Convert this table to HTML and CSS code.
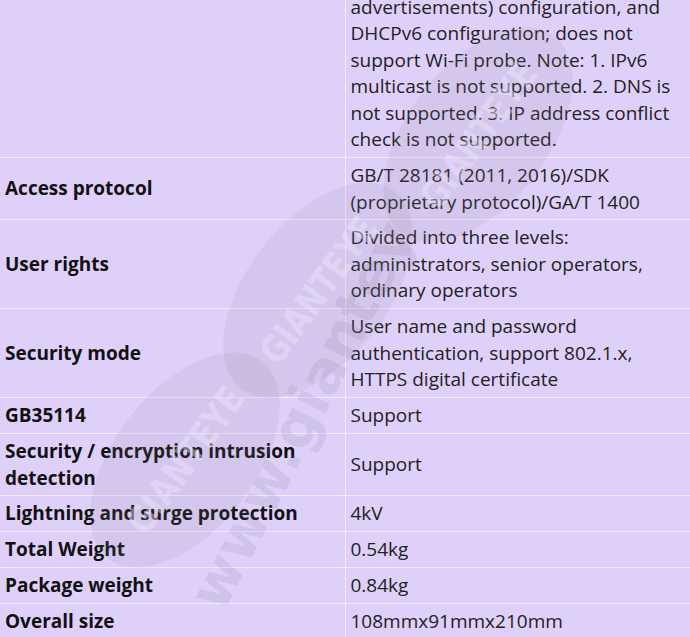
FILE: index.html
```html
<!DOCTYPE html>
<html lang="en">
<head>
<meta charset="utf-8">
<title>Specifications</title>
<link rel="stylesheet" href="styles.css">
</head>
<body>
<div class="page">
  <table class="spec">
    <colgroup><col class="c-label"><col class="c-value"></colgroup>
    <tr class="first">
      <th></th>
      <td>advertisements) configuration, and DHCPv6 configuration; does not support Wi-Fi probe. Note: 1. IPv6 multicast is not supported. 2. DNS is not supported. 3. IP address conflict check is not supported.</td>
    </tr>
    <tr><th>Access protocol</th><td>GB/T 28181 (2011, 2016)/SDK (proprietary protocol)/GA/T 1400</td></tr>
    <tr><th>User rights</th><td>Divided into three levels: administrators, senior operators, ordinary operators</td></tr>
    <tr><th>Security mode</th><td>User name and password authentication, support 802.1.x, HTTPS digital certificate</td></tr>
    <tr><th>GB35114</th><td>Support</td></tr>
    <tr><th>Security / encryption intrusion detection</th><td>Support</td></tr>
    <tr><th>Lightning and surge protection</th><td>4kV</td></tr>
    <tr><th>Total Weight</th><td>0.54kg</td></tr>
    <tr><th>Package weight</th><td>0.84kg</td></tr>
    <tr><th>Overall size</th><td>108mmx91mmx210mm</td></tr>
  </table>
  <div class="watermark" aria-hidden="true">
    <div class="blob b1"><span>GIANTEYE</span></div>
    <div class="blob b2"><span>GIANTEYE</span></div>
    <div class="blob b3"><span>GIANTEYE</span></div>
    <div class="site">www.giantey</div>
  </div>
</div>
</body>
</html>
```
FILE: styles.css
```css
html, body {
  margin: 0;
  padding: 0;
  background: #dfd0fa;
}
.page {
  position: relative;
  width: 690px;
  height: 637px;
  overflow: hidden;
  background: #dfd0fa;
  font-family: "Open Sans", "Noto Sans", sans-serif;
  color: #1a1a1a;
}
.spec {
  width: 690px;
  margin-top: -10.5px;
  border-collapse: collapse;
  table-layout: fixed;
  font-size: 19px;
  line-height: 26.5px;
}
.c-label { width: 345px; }
.c-value { width: 345px; }
.spec th, .spec td {
  padding: 4.2px 4px 4.2px 5px;
  border: 1px solid #f2ebfd;
  text-align: left;
  vertical-align: middle;
}
.spec tr:first-child th, .spec tr:first-child td { border-top: 0; }
.spec th:first-child { border-left: 0; }
.spec td:last-child { border-right: 0; }
.spec th {
  font-weight: 700;
  color: #111;
}
.spec td {
  font-weight: 400;
  color: #222;
}
.watermark {
  position: absolute;
  inset: 0;
  pointer-events: none;
}
.blob {
  position: absolute;
  width: 140px;
  height: 250px;
  border-radius: 50%;
  background: rgba(140, 130, 150, 0.13);
  display: flex;
  align-items: center;
  justify-content: center;
  transform: rotate(38deg);
}
.blob span {
  transform: rotate(-92deg) scaleY(1.1);
  font-family: "DejaVu Sans Condensed", "DejaVu Sans", sans-serif;
  font-weight: 700;
  font-size: 34px;
  color: rgba(240, 232, 255, 0.45);
  white-space: nowrap;
}
.b1 { left: 408px; top: 10px; }
.b2 { left: 248px; top: 165px; }
.b3 { left: 115px; top: 335px; }
.site {
  position: absolute;
  left: 205px;
  top: 575px;
  line-height: 60px;
  font-family: "DejaVu Sans", sans-serif;
  font-weight: 700;
  font-size: 58px;
  color: rgba(130, 120, 150, 0.15);
  transform: rotate(-63deg);
  transform-origin: 0 50%;
  white-space: nowrap;
}
```
